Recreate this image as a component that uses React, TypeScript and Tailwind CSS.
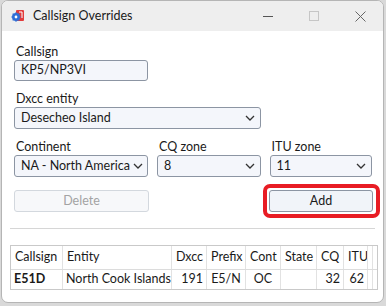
import React from 'react';

const font = { fontFamily: 'Lato, "Noto Sans", sans-serif' };

const Chevron = () => (
    <svg width="10" height="6" viewBox="0 0 10 6" className="shrink-0">
        <path d="M1 1 L5 5 L9 1" fill="none" stroke="#333" strokeWidth="1.3" />
    </svg>
);

const Select = ({ value, className = '' }: { value: string; className?: string }) => (
    <div className={`h-[22px] flex items-center justify-between gap-[3px] pl-[6px] pr-[5px] bg-[#f4f6fb] border border-[#8c95a3] rounded-[3px] ${className}`}>
        <span className="text-[12.5px] text-[#1a1a1a] leading-none whitespace-nowrap">{value}</span>
        <Chevron />
    </div>
);

const Label = ({ children }: { children: React.ReactNode }) => (
    <div className="text-[12.5px] leading-[16px] text-[#1a1a1a] pl-[2px]">{children}</div>
);

const AppIcon = () => (
    <svg width="14" height="14" viewBox="0 0 14 14">
        <rect x="5" y="1" width="8" height="11" rx="1" fill="#e23b3b" />
        <path d="M8 3 L11 3 L11 9" fill="none" stroke="#fff" strokeWidth="1" />
        <circle cx="5" cy="8" r="4" fill="#2f6fd6" />
        <path d="M5 3.3 V12.7 M0.3 8 H9.7 M1.7 4.7 L8.3 11.3 M8.3 4.7 L1.7 11.3" stroke="#2f6fd6" strokeWidth="1.2" />
        <circle cx="5" cy="8" r="1.4" fill="#fff" />
    </svg>
);

const cols = [
    { key: 'callsign', label: 'Callsign', w: 'w-[52px]', align: 'left' },
    { key: 'entity', label: 'Entity', w: 'w-[109px]', align: 'left' },
    { key: 'dxcc', label: 'Dxcc', w: 'w-[35px]', align: 'right' },
    { key: 'prefix', label: 'Prefix', w: 'w-[39px]', align: 'center' },
    { key: 'cont', label: 'Cont', w: 'w-[35px]', align: 'center' },
    { key: 'state', label: 'State', w: 'w-[36px]', align: 'left' },
    { key: 'cq', label: 'CQ', w: 'w-[27px]', align: 'right' },
    { key: 'itu', label: 'ITU', w: 'w-[24px]', align: 'right' },
];

const row: Record<string, string> = {
    callsign: 'E51D',
    entity: 'North Cook Islands',
    dxcc: '191',
    prefix: 'E5/N',
    cont: 'OC',
    state: '',
    cq: '32',
    itu: '62',
};

export default function App() {
    return (
        <div className="w-[386px] h-[306px] bg-[#d9d9d9] pl-px" style={font}>
            <div className="w-[383px] h-[303px] bg-white rounded-[7px] border border-[#b5b5b5] overflow-hidden flex flex-col">
                {/* Title bar */}
                <div className="h-[30px] shrink-0 bg-[#eeeeee] flex items-center">
                    <div className="pl-[9px] pr-[8px] flex items-center">
                        <AppIcon />
                    </div>
                    <span className="text-[12.5px] text-[#1a1a1a]">Callsign Overrides</span>
                    <div className="ml-auto flex items-center h-full">
                        <div className="w-[46px] flex justify-center">
                            <div className="w-[10px] h-px bg-[#555]" />
                        </div>
                        <div className="w-[46px] flex justify-center">
                            <div className="w-[10px] h-[10px] border border-[#c6c6c6]" />
                        </div>
                        <div className="w-[46px] flex justify-center">
                            <svg width="11" height="11" viewBox="0 0 11 11">
                                <path d="M0.5 0.5 L10.5 10.5 M10.5 0.5 L0.5 10.5" stroke="#666" strokeWidth="1" />
                            </svg>
                        </div>
                    </div>
                </div>

                {/* Form */}
                <div className="flex flex-col pl-[12px] pr-[11px] pt-[13px]">
                    <Label>Callsign</Label>
                    <div className="w-[134px] h-[21px] flex items-center px-[6px] bg-[#f4f6fb] border border-[#8c95a3] rounded-[3px] text-[12.5px] text-[#1a1a1a]">
                        KP5/NP3VI
                    </div>

                    <div className="mt-[10px]">
                        <Label>Dxcc entity</Label>
                    </div>
                    <Select value="Desecheo Island" className="w-[247px]" />

                    <div className="mt-[10px] flex gap-[9px]">
                        <div className="flex flex-col w-[134px]">
                            <Label>Continent</Label>
                            <Select value="NA - North America" />
                        </div>
                        <div className="flex flex-col w-[104px]">
                            <Label>CQ zone</Label>
                            <Select value="8" />
                        </div>
                        <div className="flex flex-col w-[103px]">
                            <Label>ITU zone</Label>
                            <Select value="11" />
                        </div>
                    </div>

                    <div className="mt-[13px] flex justify-between w-[359px]">
                        <div className="w-[135px] h-[22px] flex items-center justify-center bg-[#f7f8fa] border border-[#d3d8de] rounded-[3px] text-[12.5px] text-[#a3a3a3]">
                            Delete
                        </div>
                        <div className="relative w-[104px] h-[22px]">
                            <div className="w-full h-full flex items-center justify-center bg-[#f1f4f9] border border-[#8c95a3] rounded-[3px] text-[12.5px] text-[#1a1a1a]">
                                Add
                            </div>
                            <div className="absolute -left-[6px] -right-[7px] -top-[6px] -bottom-[6px] border-[4px] border-[#e81c24] rounded-[7px]" />
                        </div>
                    </div>
                </div>

                <div className="mt-[16px] mx-[8px] h-px bg-[#d6d6d6]" />

                {/* Table */}
                <div className="mt-[16px] ml-[8px] w-[368px] h-[45px] border border-[#c9c9c9] text-[12.5px] text-[#1a1a1a]">
                    <div className="flex h-[24px] border-b border-[#dcdcdc]">
                        {cols.map(c => (
                            <div key={c.key} className={`${c.w} shrink-0 border-r border-[#e2e2e2] flex items-center px-[4px] overflow-hidden`}>
                                <span className="whitespace-nowrap">{c.label}</span>
                            </div>
                        ))}
                        <div className="w-[5px] shrink-0 border-r border-[#e2e2e2]" />
                    </div>
                    <div className="flex h-[19px]">
                        {cols.map(c => (
                            <div key={c.key} className={`${c.w} shrink-0 border-r border-[#e2e2e2] flex items-center px-[3px] overflow-hidden ${c.align === 'right' ? 'justify-end' : c.align === 'center' ? 'justify-center' : 'justify-start'}`}>
                                <span className={`whitespace-nowrap ${c.key === 'callsign' ? 'font-bold' : ''}`}>{row[c.key]}</span>
                            </div>
                        ))}
                        <div className="w-[5px] shrink-0 border-r border-[#e2e2e2]" />
                    </div>
                </div>
            </div>
        </div>
    );
}
